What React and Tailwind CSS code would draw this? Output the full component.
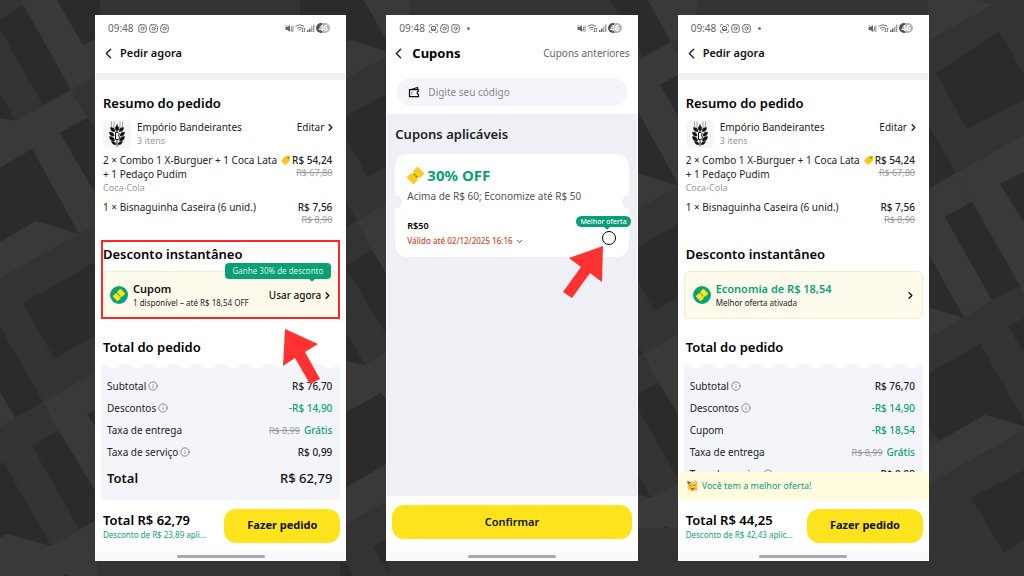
import { ChevronDown, ChevronLeft, ChevronRight, Info, Instagram } from 'lucide-react';

const DARK = '#2b2b2b';
const MID = '#333333';
const LIGHT = '#393939';

// Facets of the backdrop, drawn over a mid-grey base
const LEFT_FACETS = [
  [LIGHT, '21,0 57,0 83,45 97,38 97,76 71,90'],
  [DARK, '57,0 100,0 97,38 83,45'],
  [DARK, '23,5 71,90 43,105 0,29 0,19'],
  [DARK, '0,94 16,121 0,118'],
  [LIGHT, '0,118 16,121 71,90 87,118 60,133 97,196 97,225 79,234 32,149 0,168'],
  [DARK, '60,133 87,118 97,132 97,196'],
  [DARK, '0,168 32,149 79,234 36,221 0,242'],
  [LIGHT, '0,242 36,221 79,234 0,278'],
  [DARK, '23,303 97,261 97,335 54,358'],
  [DARK, '0,327 43,402 15,418 0,392'],
  [LIGHT, '0,392 15,418 0,427'],
  [LIGHT, '43,402 97,371 97,494 59,431'],
  [DARK, '87,414 97,409 97,429'],
  [DARK, '32,446 59,431 97,494 97,520 79,529'],
  [DARK, '0,464 3,462 51,546 7,534 0,538'],
  [LIGHT, '0,538 7,534 51,546 97,520 97,576 0,576'],
  [DARK, '63,576 67,574 69,576'],
];

const CENTER_FACETS = [
  [DARK, '300,0 364,0 388,43 388,52 351,40 345,42 300,30'],
  [LIGHT, '364,0 410,0 410,40 388,43'],
  [LIGHT, '345,42 351,40 388,52 388,55 345,79'],
  [DARK, '345,117 388,93 388,166 368,177 345,137'],
  [DARK, '345,200 357,221 345,228'],
  [LIGHT, '357,221 388,203 388,277 372,250'],
  [DARK, '345,266 372,250 388,277 388,338'],
  [DARK, '345,331 365,365 345,361'],
  [LIGHT, '345,361 365,365 388,351 388,403 381,393 345,413'],
  [DARK, '345,413 381,393 388,403 388,463 345,488'],
  [LIGHT, '345,488 388,463 388,500 345,525'],
  [DARK, '373,546 388,538 388,573'],
  [DARK, '340,562 347,564 352,576 340,576'],
];

const RIGHT_FACETS = [
  [LIGHT, '928,0 976,0 992,5 928,41'],
  [DARK, '936,73 999,31 1024,75 1024,100 967,129'],
  [DARK, '928,125 956,173 928,188'],
  [LIGHT, '956,173 1024,135 1024,172 1000,184 1024,222 1024,294'],
  [DARK, '1000,184 1024,172 1024,222'],
  [LIGHT, '928,190 956,173 972,202 945,217 992,300 964,318 928,253'],
  [DARK, '945,217 972,202 1020,286 992,300'],
  [DARK, '928,253 964,318 928,307'],
  [LIGHT, '928,307 964,318 928,338'],
  [DARK, '1008,327 1024,318 1024,352'],
  [DARK, '928,374 980,344 1024,421 1024,426 985,415 939,441 928,424'],
  [LIGHT, '939,441 985,415 1024,426 1024,430 928,484 928,447'],
  [DARK, '971,498 1024,470 1024,540 1004,552'],
];

function Facets({ items, transform }) {
  return (
    <g transform={transform}>
      {items.map(([fill, points]) => (
        <polygon key={points} points={points} fill={fill} />
      ))}
    </g>
  );
}

function Backdrop() {
  return (
    <svg
      aria-hidden="true"
      viewBox="0 0 1024 576"
      preserveAspectRatio="xMidYMid slice"
      className="absolute inset-0 h-full w-full"
    >
      <rect width="1024" height="576" fill={MID} />
      <Facets items={LEFT_FACETS} />
      <Facets items={CENTER_FACETS} />
      <Facets items={LEFT_FACETS} transform="translate(600 -48)" />
      <Facets items={RIGHT_FACETS} />
    </svg>
  );
}

function CaptureIcon() {
  return (
    <svg width="9" height="9" viewBox="0 0 18 18" fill="none" stroke="currentColor" strokeWidth="2">
      <path d="M1 5V3a2 2 0 0 1 2-2h2M13 1h2a2 2 0 0 1 2 2v2M17 13v2a2 2 0 0 1-2 2h-2M5 17H3a2 2 0 0 1-2-2v-2" />
      <rect x="5" y="5" width="8" height="8" rx="1" />
      <path d="M6 12l3-3 3 3" />
    </svg>
  );
}

function StatusBar({ capture }) {
  return (
    <div className="flex h-[26px] items-center justify-between pr-4 pl-[13px] text-[#666]">
      <div className="flex items-center gap-[2px]">
        <span className="mr-[2px] text-[10px] leading-3">09:48</span>
        {capture ? <CaptureIcon /> : <Instagram size={9} strokeWidth={2.5} />}
        <Instagram size={9} strokeWidth={2.5} />
        <Instagram size={9} strokeWidth={2.5} />
        {capture ? <span className="ml-[5px] h-[3px] w-[3px] rounded-full bg-[#777]" /> : null}
      </div>
      <div className="flex items-center gap-px">
        <svg width="9" height="9" viewBox="0 0 18 18" fill="currentColor">
          <path d="M1 6h4l5-4v14l-5-4H1z" />
          <path d="M1 2l14 14M13 5v8M16 3v12" stroke="currentColor" strokeWidth="1.5" fill="none" />
        </svg>
        <svg width="11" height="9" viewBox="0 0 22 18" fill="none" stroke="currentColor" strokeWidth="2">
          <path d="M1 5c5-4 12-4 17 0M4 9c3-3 8-3 11 0M7 12c2-1 3-1 5 0" />
          <path d="M15 8v8M13 14l2 2 2-2M19 16V8M17 10l2-2 2 2" strokeWidth="1.5" />
        </svg>
        <svg width="8" height="8" viewBox="0 0 16 16" fill="currentColor">
          <path d="M0 12h3v4H0zM4 9h3v7H4z" />
          <path d="M8 5h3v11H8zM12 1h3v15h-3z" opacity="0.6" />
        </svg>
        <span className="flex h-[10px] w-[14px] items-center justify-center rounded-full bg-linear-to-r from-[#555] from-45% to-[#b5b5b5] to-45% text-[8px] leading-[10px] font-bold text-white">
          46
        </span>
      </div>
    </div>
  );
}

function NavBar() {
  return (
    <div className="flex h-[10px] shrink-0 items-center justify-center bg-[#fafafa]">
      <span className="h-[3px] w-[88px] rounded-full bg-[#a9a9a9]" />
    </div>
  );
}

function Phone({ children, capture }) {
  return (
    <section className="relative flex min-w-0 flex-col bg-white text-[#222]">
      <StatusBar capture={capture} />
      {children}
      <NavBar />
    </section>
  );
}

function StoreLogo() {
  return (
    <span className="flex h-7 w-7 shrink-0 items-center justify-center rounded-md bg-[#f6f6f6]">
      <svg width="18" height="26" viewBox="0 0 36 52" aria-hidden="true">
        <path d="M7 1v12M12 1v14M24 1v14M29 1v12" stroke="#888" strokeWidth="1.5" />
        <path d="M18 6v45" stroke="#333" strokeWidth="2" />
        <g fill="#111" stroke="#111" strokeWidth="1" strokeLinejoin="round">
          <path d="M18 9c-5 4-5 8 0 11 5-3 5-7 0-11z" />
          <path d="M5 13c6 0 9 3 9 8-6 1-9-2-9-8zM31 13c-6 0-9 3-9 8 6 1 9-2 9-8z" />
          <path d="M3 22c6 0 9 3 9 8-6 1-9-2-9-8zM33 22c-6 0-9 3-9 8 6 1 9-2 9-8z" />
          <path d="M3 31c7 0 10 3 10 9-6 1-10-3-10-9zM33 31c-7 0-10 3-10 9 6 1 10-3 10-9z" />
          <path d="M7 41c6 0 9 2 9 6-4 1-8-1-9-6zM29 41c-6 0-9 2-9 6 4 1 8-1 9-6z" />
        </g>
        <path d="M15 23h4c4 0 4 6 1 6 4 1 4 8-1 8h-4z" fill="#f6f6f6" stroke="#111" strokeWidth="2" />
      </svg>
    </span>
  );
}

function TagIcon() {
  return (
    <svg width="10" height="10" viewBox="0 0 20 20" aria-hidden="true">
      <path d="M9 2l8-1 2 2-1 8-8 8c-1 1-2 1-3 0l-6-6c-1-1-1-2 0-3z" fill="#ffc61a" />
      <circle cx="14.5" cy="5.5" r="2" fill="#2f9e62" />
    </svg>
  );
}

// Ticket with its notches on the two long sides
function Ticket({ size, fill, mark }) {
  return (
    <svg width={size} height={size} viewBox="0 0 24 24" aria-hidden="true">
      <g transform="rotate(-45 12 12)">
        <path
          d="M2 5h8a2 2 0 0 0 4 0h8c1 0 1 0 1 1v12c0 1 0 1-1 1h-8a2 2 0 0 0-4 0H2c-1 0-1 0-1-1V6c0-1 0-1 1-1z"
          fill={fill}
        />
        <path d="M12 9v6" stroke={mark} strokeWidth="2" strokeDasharray="2.5 1" />
      </g>
    </svg>
  );
}

function CouponBadge() {
  return (
    <span className="flex h-[18px] w-[18px] shrink-0 items-center justify-center rounded-full bg-[#0aa277]">
      <Ticket size={12} fill="#ffe11c" mark="#0aa277" />
    </span>
  );
}

function PartyFace() {
  return (
    <svg width="12" height="12" viewBox="0 0 24 24" aria-hidden="true">
      <circle cx="13" cy="13" r="10" fill="#ffc933" />
      <path d="M2 2l8 2-6 6z" fill="#7257c8" />
      <path d="M18 1l2 3M22 4l-1 3" stroke="#e0527b" strokeWidth="2" />
      <path d="M7 12c1-2 3-2 4 0M15 12c1-2 3-2 4 0" stroke="#6b3d12" strokeWidth="1.5" fill="none" />
      <path d="M9 15c2 2 6 2 8 0-1 6-7 6-8 0z" fill="#a3431c" />
      <path d="M18 17l5 1-2 2-3-1z" fill="#4a9be0" />
    </svg>
  );
}

function SectionTitle({ children, className = '' }) {
  return <h2 className={`px-2 text-[13px] leading-5 font-semibold text-black ${className}`}>{children}</h2>;
}

function OrderItem({ name, note, price, oldPrice, tagged }) {
  return (
    <li className="flex justify-between">
      <div className="min-w-0 text-[10px] leading-[14px]">
        <p>{name}</p>
        {note ? <p className="text-[9px] text-[#999]">{note}</p> : null}
      </div>
      <div className="shrink-0 text-right">
        <p className="flex items-center justify-end gap-px text-[10px] leading-[14px] font-medium">
          {tagged ? <TagIcon /> : null}
          {price}
        </p>
        <p className="text-[9px] leading-3 text-[#999] line-through">{oldPrice}</p>
      </div>
    </li>
  );
}

function OrderSummary() {
  return (
    <>
      <SectionTitle className="mt-[13px]">Resumo do pedido</SectionTitle>
      <div className="mt-[7px] flex gap-[6px] pr-[10px] pl-2">
        <StoreLogo />
        <div className="flex-1">
          <p className="text-[10px] leading-[14px]">Empório Bandeirantes</p>
          <p className="text-[9px] leading-[14px] text-[#999]">3 itens</p>
        </div>
        <a href="#editar" className="flex h-[14px] items-center gap-px text-[10px] leading-[14px]">
          Editar
          <ChevronRight size={11} strokeWidth={3} />
        </a>
      </div>
      <ul className="mt-[5px] flex flex-col gap-[5px] pr-[14px] pl-2">
        <OrderItem
          name="2 × Combo 1 X-Burguer + 1 Coca Lata + 1 Pedaço Pudim"
          note="Coca-Cola"
          price="R$ 54,24"
          oldPrice="R$ 67,80"
          tagged
        />
        <OrderItem name="1 × Bisnaguinha Caseira (6 unid.)" price="R$ 7,56" oldPrice="R$ 8,90" />
      </ul>
    </>
  );
}

function CouponCard({ title, detail, action, titleClass }) {
  return (
    <button
      type="button"
      className="mx-[6px] mt-[7px] flex h-12 items-center gap-[5px] rounded-md border border-[#f5edc4] bg-[#fffbec] pr-[6px] pl-2 text-left"
    >
      <CouponBadge />
      <span className="flex flex-1 flex-col">
        <span className={`text-[11px] leading-[15px] font-semibold ${titleClass}`}>{title}</span>
        <span className="text-[8px] leading-[14px]">{detail}</span>
      </span>
      <span className="flex items-center gap-px text-[10px] font-medium text-[#111]">
        {action}
        <ChevronRight size={11} strokeWidth={3} />
      </span>
    </button>
  );
}

function FeeRow({ label, info, value, oldValue, green }) {
  return (
    <div className="flex h-[22px] items-center justify-between">
      <dt className="flex items-center gap-[2px]">
        {label}
        {info ? <Info size={10} strokeWidth={1.5} className="text-[#555]" /> : null}
      </dt>
      <dd className={green ? 'font-medium text-[#0aa277]' : 'font-medium'}>
        {oldValue ? <s className="mr-1 text-[9px] font-normal text-[#999]">{oldValue}</s> : null}
        {value}
      </dd>
    </div>
  );
}

function Receipt({ rows, total }) {
  return (
    <div className="mx-[6px] mt-[7px] flex-1 bg-[#f4f5fa]">
      <div className="h-[6px] bg-[radial-gradient(circle_at_12px_-5px,white_9px,transparent_10px)] bg-[length:24px_6px]" />
      <dl className="pt-[5px] pr-2 pl-[6px] text-[10px]">
        {rows.map((row) => (
          <FeeRow key={row.label} {...row} />
        ))}
        <div className="mt-1 flex h-6 items-center justify-between text-[13px] text-[#111]">
          <dt className="font-semibold">Total</dt>
          <dd className="font-medium">{total}</dd>
        </div>
      </dl>
    </div>
  );
}

function OrderScreen({ capture, discount, rows, total, saving, banner, children }) {
  return (
    <Phone capture={capture}>
      <header className="flex h-8 shrink-0 items-start gap-[3px] pt-1 pl-[5px]">
        <button type="button" aria-label="Voltar">
          <ChevronLeft size={17} strokeWidth={2} />
        </button>
        <h1 className="text-[11px] leading-4 font-semibold text-[#111]">Pedir agora</h1>
      </header>
      <div className="mx-px h-[7px] shrink-0 bg-[#eff0f5]" />
      <div className="flex min-h-0 flex-1 flex-col overflow-hidden">
        <OrderSummary />
        {discount}
        <SectionTitle className="mt-[18px]">Total do pedido</SectionTitle>
        <Receipt rows={rows} total={total} />
      </div>
      {banner}
      <footer className="flex h-[51px] shrink-0 items-center justify-between gap-2 bg-white pr-[6px] pl-2">
        <div className="min-w-0 whitespace-nowrap">
          <p className="text-[13px] leading-[18px] font-semibold text-black">Total {total}</p>
          <p className="text-[8px] leading-3 text-[#0aa277]">{saving}</p>
        </div>
        <button
          type="button"
          className="h-[34px] w-[116px] shrink-0 rounded-xl bg-[#ffe31c] text-[11px] font-bold text-[#111]"
        >
          Fazer pedido
        </button>
      </footer>
      {children}
    </Phone>
  );
}

function CouponsScreen() {
  return (
    <Phone capture>
      <header className="flex h-8 shrink-0 items-start pt-1 pr-2 pl-1">
        <button type="button" aria-label="Voltar">
          <ChevronLeft size={17} strokeWidth={2} />
        </button>
        <h1 className="ml-[5px] flex-1 text-[13px] leading-4 font-bold text-black">Cupons</h1>
        <a href="#anteriores" className="text-[10px] leading-4 text-[#666]">
          Cupons anteriores
        </a>
      </header>
      <label className="mx-[11px] mt-[5px] mb-2 flex h-7 shrink-0 items-center gap-2 rounded-full bg-[#f4f5fa] px-[11px]">
        <svg width="12" height="12" viewBox="0 0 24 24" fill="none" stroke="#111" strokeWidth="2.5" aria-hidden="true">
          <path d="M21 9V7H3v14h18v-3M6 7l13-4v4" />
          <path d="M22 10c-5 0-5 7 0 7" />
          <path d="M8 11v6" stroke="#e0562c" strokeWidth="2" />
        </svg>
        <input
          type="text"
          aria-label="Código do cupom"
          placeholder="Digite seu código"
          className="min-w-0 flex-1 bg-transparent text-[10px] outline-none placeholder:text-[#888]"
        />
      </label>
      <div className="mx-px min-h-0 flex-1 bg-[#eff0f5] px-2 pt-[10px]">
        <h2 className="text-[13px] leading-5 font-semibold">Cupons aplicáveis</h2>
        <article className="relative mt-[10px] h-[103px] rounded-xl bg-white pt-[11px] pl-3">
          <span className="absolute top-[41px] -left-[7px] h-[14px] w-[14px] rounded-full bg-[#eff0f5]" />
          <span className="absolute top-[41px] -right-[7px] h-[14px] w-[14px] rounded-full bg-[#eff0f5]" />
          <h3 className="flex items-center gap-[3px] text-[15px] leading-5 font-bold text-[#0a9f74]">
            <Ticket size={17} fill="#ffcb22" mark="#0a9f74" />
            30% OFF
          </h3>
          <p className="mt-[3px] text-[10px] leading-4 text-[#555]">Acima de R$ 60; Economize até R$ 50</p>
          <p className="mt-[15px] text-[9px] leading-[14px] font-semibold text-black">R$50</p>
          <button type="button" className="flex items-center gap-[2px] text-[8px] leading-4 font-medium text-[#d0442a]">
            Válido até 02/12/2025 16:16
            <ChevronDown size={9} strokeWidth={2.5} className="text-[#444]" />
          </button>
          <input
            type="radio"
            aria-label="Selecionar cupom de 30% OFF"
            className="absolute right-[13px] bottom-[12px] h-[14px] w-[14px] appearance-none rounded-full border border-black bg-white"
          />
          <span className="absolute -right-[2px] bottom-[30px] rounded-full bg-[#0a9f74] px-1 text-[7px] leading-[11px] font-medium text-white">
            Melhor oferta
            <span className="absolute -bottom-[2px] left-[29px] h-1 w-1 rotate-45 bg-[#0a9f74]" />
          </span>
          <svg
            aria-hidden="true"
            viewBox="563 246 41 53"
            width="41"
            height="53"
            className="absolute top-[92px] right-[25px]"
          >
            <polygon points="603,246 602,282 590,273 572,298 563,292 581,267 569,258" fill="#ff3131" />
          </svg>
        </article>
      </div>
      <footer className="flex h-[55px] shrink-0 items-start bg-white px-[6px] pt-[9px]">
        <button type="button" className="h-[34px] flex-1 rounded-xl bg-[#ffe31c] text-[11px] font-semibold text-[#111]">
          Confirmar
        </button>
      </footer>
    </Phone>
  );
}

const baseRows = [
  { label: 'Subtotal', info: true, value: 'R$ 76,70' },
  { label: 'Descontos', info: true, value: '-R$ 14,90', green: true },
];

const feeRows = [
  { label: 'Taxa de entrega', value: 'Grátis', oldValue: 'R$ 8,99', green: true },
  { label: 'Taxa de serviço', info: true, value: 'R$ 0,99' },
];

export default function App() {
  return (
    <main className="relative h-screen overflow-hidden bg-[#333] font-['Noto_Sans',sans-serif]">
      <Backdrop />
      <div className="relative grid h-full grid-cols-3 grid-rows-[minmax(0,1fr)] gap-10 px-[95px] py-[15px]">
        <OrderScreen
          rows={[...baseRows, ...feeRows]}
          total="R$ 62,79"
          saving="Desconto de R$ 23,89 apli..."
          discount={
            <section className="relative mt-[18px] flex flex-col">
              <SectionTitle>Desconto instantâneo</SectionTitle>
              <CouponCard
                title="Cupom"
                titleClass="text-[#111]"
                detail="1 disponível – até R$ 18,54 OFF"
                action="Usar agora"
              />
              <span className="absolute top-[19px] right-[15px] rounded bg-[#0a9f74] px-2 text-[8px] leading-4 text-[#d5f5e8]">
                Ganhe 30% de desconto
                <span className="absolute right-[17px] -bottom-[2px] h-1 w-1 rotate-45 bg-[#0a9f74]" />
              </span>
              <span className="absolute -top-1 right-[6px] bottom-0 left-[6px] border-2 border-[#ff2626]" />
            </section>
          }
        >
          <svg
            aria-hidden="true"
            viewBox="283 329 39 56"
            width="39"
            height="56"
            className="absolute top-[314px] right-[25px]"
          >
            <polygon points="286,329 319,344 306,352 321,379 311,384 296,358 284,366" fill="#ff3131" />
          </svg>
        </OrderScreen>

        <CouponsScreen />

        <OrderScreen
          capture
          rows={[...baseRows, { label: 'Cupom', value: '-R$ 18,54', green: true }, ...feeRows]}
          total="R$ 44,25"
          saving="Desconto de R$ 42,43 aplic..."
          discount={
            <section className="mt-[18px] flex flex-col">
              <SectionTitle>Desconto instantâneo</SectionTitle>
              <CouponCard title="Economia de R$ 18,54" titleClass="text-[#0aa277]" detail="Melhor oferta ativada" />
            </section>
          }
          banner={
            <p className="flex h-7 shrink-0 items-center gap-1 rounded-t-md bg-[#fffce0] px-2 text-[9px] text-[#0aa277]">
              <PartyFace />
              Você tem a melhor oferta!
            </p>
          }
        />
      </div>
    </main>
  );
}
